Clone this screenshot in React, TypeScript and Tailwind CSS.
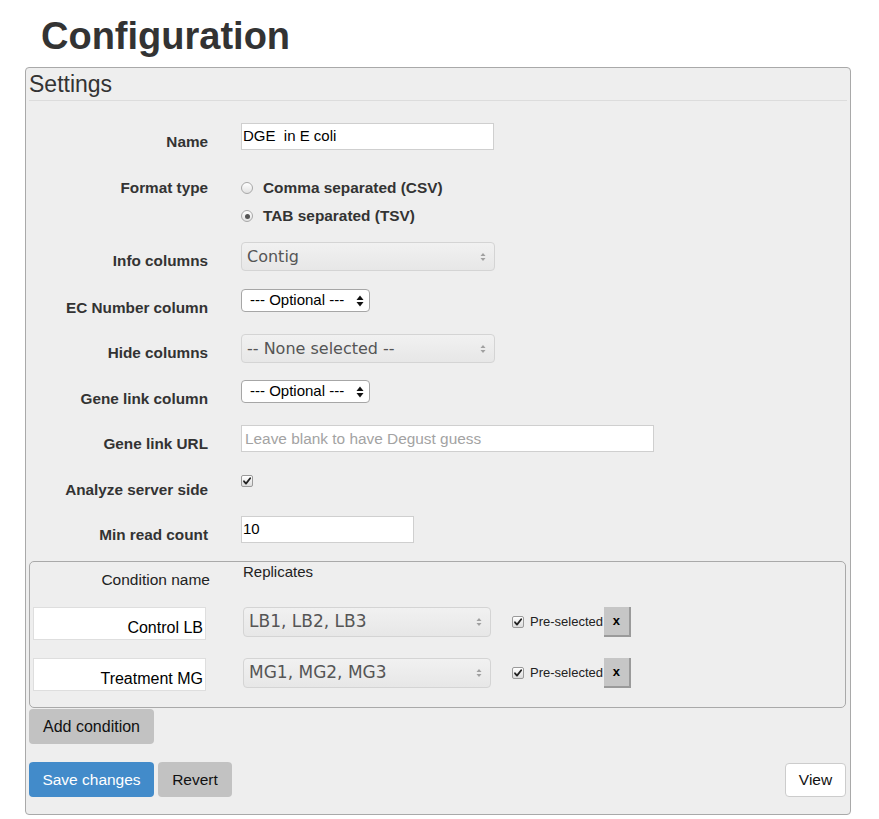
import React from "react";

function MultiArrows() {
  return (
    <svg width="6" height="10" viewBox="0 0 6 10" className="shrink-0">
      <path d="M0.5 4 L3 1 L5.5 4 Z" fill="#a0a0a0" />
      <path d="M0.5 6 L3 9 L5.5 6 Z" fill="#a0a0a0" />
    </svg>
  );
}

function NativeArrows() {
  return (
    <svg width="8" height="12" viewBox="0 0 8 12" className="shrink-0">
      <path d="M0.5 5 L4 0.5 L7.5 5 Z" fill="#111" />
      <path d="M0.5 7 L4 11.5 L7.5 7 Z" fill="#111" />
    </svg>
  );
}

function CheckBox() {
  return (
    <span className="flex h-[12px] w-[12px] shrink-0 items-center justify-center rounded-[2px] border border-[#9a9a9a] bg-linear-to-b from-[#ffffff] to-[#dcdcdc]">
      <svg width="10" height="10" viewBox="0 0 10 10">
        <path d="M2 5.3 L4 7.6 L8.2 2.2" fill="none" stroke="#222" strokeWidth="1.8" strokeLinecap="round" strokeLinejoin="round" />
      </svg>
    </span>
  );
}

function Radio({ checked }: { checked?: boolean }) {
  return (
    <span className="flex h-[12px] w-[12px] shrink-0 items-center justify-center rounded-full border border-[#a8a8a8] bg-linear-to-b from-[#ffffff] to-[#e2e2e2]">
      {checked && <span className="h-[5px] w-[5px] rounded-full bg-[#555]" />}
    </span>
  );
}

function MultiSelect({ text }: { text: string }) {
  return (
    <div className="flex h-[29px] w-[254px] items-center justify-between rounded-[4px] border border-[#d4d4d4] bg-linear-to-b from-[#f1f1f1] to-[#e7e7e7] pl-[5px] pr-[8px] font-['DejaVu_Sans',sans-serif] text-[16px] text-[#555]">
      <span className="whitespace-nowrap">{text}</span>
      <MultiArrows />
    </div>
  );
}

function NativeSelect() {
  return (
    <div className="flex h-[23px] w-[129px] items-center justify-between rounded-[4px] border border-[#a6a6a6] bg-white pl-[8px] pr-[5px] text-[15px] text-black">
      <span className="whitespace-nowrap">--- Optional ---</span>
      <NativeArrows />
    </div>
  );
}

function Row({ label, mt, children, cpt }: { label: string; mt: string; children: React.ReactNode; cpt?: string }) {
  return (
    <div className={`flex items-start ${mt}`}>
      <div className="h-[28px] w-[179px] shrink-0 pt-[8px] text-right text-[15.3px] font-bold leading-[22px] text-[#333]">{label}</div>
      <div className={`ml-[33px] ${cpt ?? ""}`}>{children}</div>
    </div>
  );
}

function ConditionRow({ name, reps, mt }: { name: string; reps: string; mt: string }) {
  return (
    <div className={`flex items-start pl-[3px] ${mt}`}>
      <div className="flex h-[33px] w-[173px] items-end justify-end border border-[#dedede] bg-white pb-[1px] pr-[2px] text-[16px] leading-[20px] text-black">
        {name}
      </div>
      <div className="ml-[37px]">
        <div className="flex h-[30px] w-[248px] items-center justify-between rounded-[4px] border border-[#d4d4d4] bg-linear-to-b from-[#f1f1f1] to-[#e7e7e7] pl-[5px] pr-[8px] font-['DejaVu_Sans',sans-serif] text-[17px] text-[#555]">
          <span className="whitespace-nowrap">{reps}</span>
          <MultiArrows />
        </div>
      </div>
      <div className="ml-[21px] flex h-[30px] items-center">
        <CheckBox />
        <span className="ml-[6px] text-[13px] text-[#222]">Pre-selected</span>
      </div>
      <div className="ml-[1px] flex h-[30px] w-[27px] items-center justify-center border-b-2 border-r-2 border-[#9a9a9a] bg-[#c6c6c6] text-[13px] font-bold text-black">
        x
      </div>
    </div>
  );
}

export default function App() {
  return (
    <div className="min-h-screen bg-white font-['Liberation_Sans',Arial,sans-serif] text-[#333]">
      <h1 className="pl-[41px] pt-[15px] text-[38px] font-bold leading-[42px] text-[#333]">Configuration</h1>
      <div className="ml-[25px] mt-[10px] h-[748px] w-[826px] rounded-[4px] border border-[#a9a9a9] bg-[#eeeeee] px-[3px]">
        <div className="border-b border-[#dcdcdc] pb-[3px] pt-[3px] text-[23px] leading-[26px] text-[#333]">Settings</div>

        <Row label="Name" mt="mt-[22px]">
          <div className="flex h-[27px] w-[253px] items-center border border-[#cfcfcf] bg-white pl-[1px] text-[15px] text-black whitespace-pre">
            DGE  in E coli
          </div>
        </Row>

        <Row label="Format type" mt="mt-[18px]" cpt="pt-[9px]">
          <div className="flex h-[20px] items-center text-[15.4px] font-bold leading-[20px]">
            <Radio />
            <span className="ml-[10px]">Comma separated (CSV)</span>
          </div>
          <div className="mt-[8px] flex h-[20px] items-center text-[15.4px] font-bold leading-[20px]">
            <Radio checked />
            <span className="ml-[10px]">TAB separated (TSV)</span>
          </div>
        </Row>

        <Row label="Info columns" mt="mt-[16px]">
          <MultiSelect text="Contig" />
        </Row>

        <Row label="EC Number column" mt="mt-[18px]">
          <NativeSelect />
        </Row>

        <Row label="Hide columns" mt="mt-[17px]">
          <MultiSelect text="-- None selected --" />
        </Row>

        <Row label="Gene link column" mt="mt-[17px]">
          <NativeSelect />
        </Row>

        <Row label="Gene link URL" mt="mt-[17px]">
          <div className="flex h-[27px] w-[413px] items-center border border-[#cfcfcf] bg-white pl-[3px] text-[15.4px] text-[#a3a3a3]">
            Leave blank to have Degust guess
          </div>
        </Row>

        <Row label="Analyze server side" mt="mt-[18px]" cpt="pt-[4px]">
          <CheckBox />
        </Row>

        <Row label="Min read count" mt="mt-[17px]">
          <div className="flex h-[27px] w-[173px] items-center border border-[#cfcfcf] bg-white pl-[1px] text-[15px] text-black">
            10
          </div>
        </Row>

        <div className="mr-[1px] mt-[17px] h-[147px] rounded-[5px] border border-[#a9a9a9]">
          <div className="flex items-start pl-[3px]">
            <div className="w-[177px] pt-[8px] text-right text-[15.5px] leading-[20px] text-[#222]">Condition name</div>
            <div className="ml-[33px] text-[15px] leading-[20px] text-[#222]">Replicates</div>
          </div>
          <ConditionRow name="Control LB" reps="LB1, LB2, LB3" mt="mt-[17px]" />
          <ConditionRow name="Treatment MG" reps="MG1, MG2, MG3" mt="mt-[18px]" />
        </div>

        <div className="mt-[1px] flex h-[35px] w-[125px] items-center justify-center rounded-[4px] bg-[#c2c2c2] text-[16px] text-[#111]">
          Add condition
        </div>

        <div className="mt-[18px] flex items-start justify-between pr-[1px]">
          <div className="flex items-start">
            <div className="flex h-[35px] w-[125px] items-center justify-center rounded-[4px] bg-[#428bca] text-[15.5px] text-white">
              Save changes
            </div>
            <div className="ml-[4px] flex h-[35px] w-[74px] items-center justify-center rounded-[4px] bg-[#c2c2c2] text-[15.5px] text-[#111]">
              Revert
            </div>
          </div>
          <div className="mt-[1px] flex h-[34px] w-[61px] items-center justify-center rounded-[4px] border border-[#cccccc] bg-white text-[15.5px] text-[#111]">
            View
          </div>
        </div>
      </div>
    </div>
  );
}
